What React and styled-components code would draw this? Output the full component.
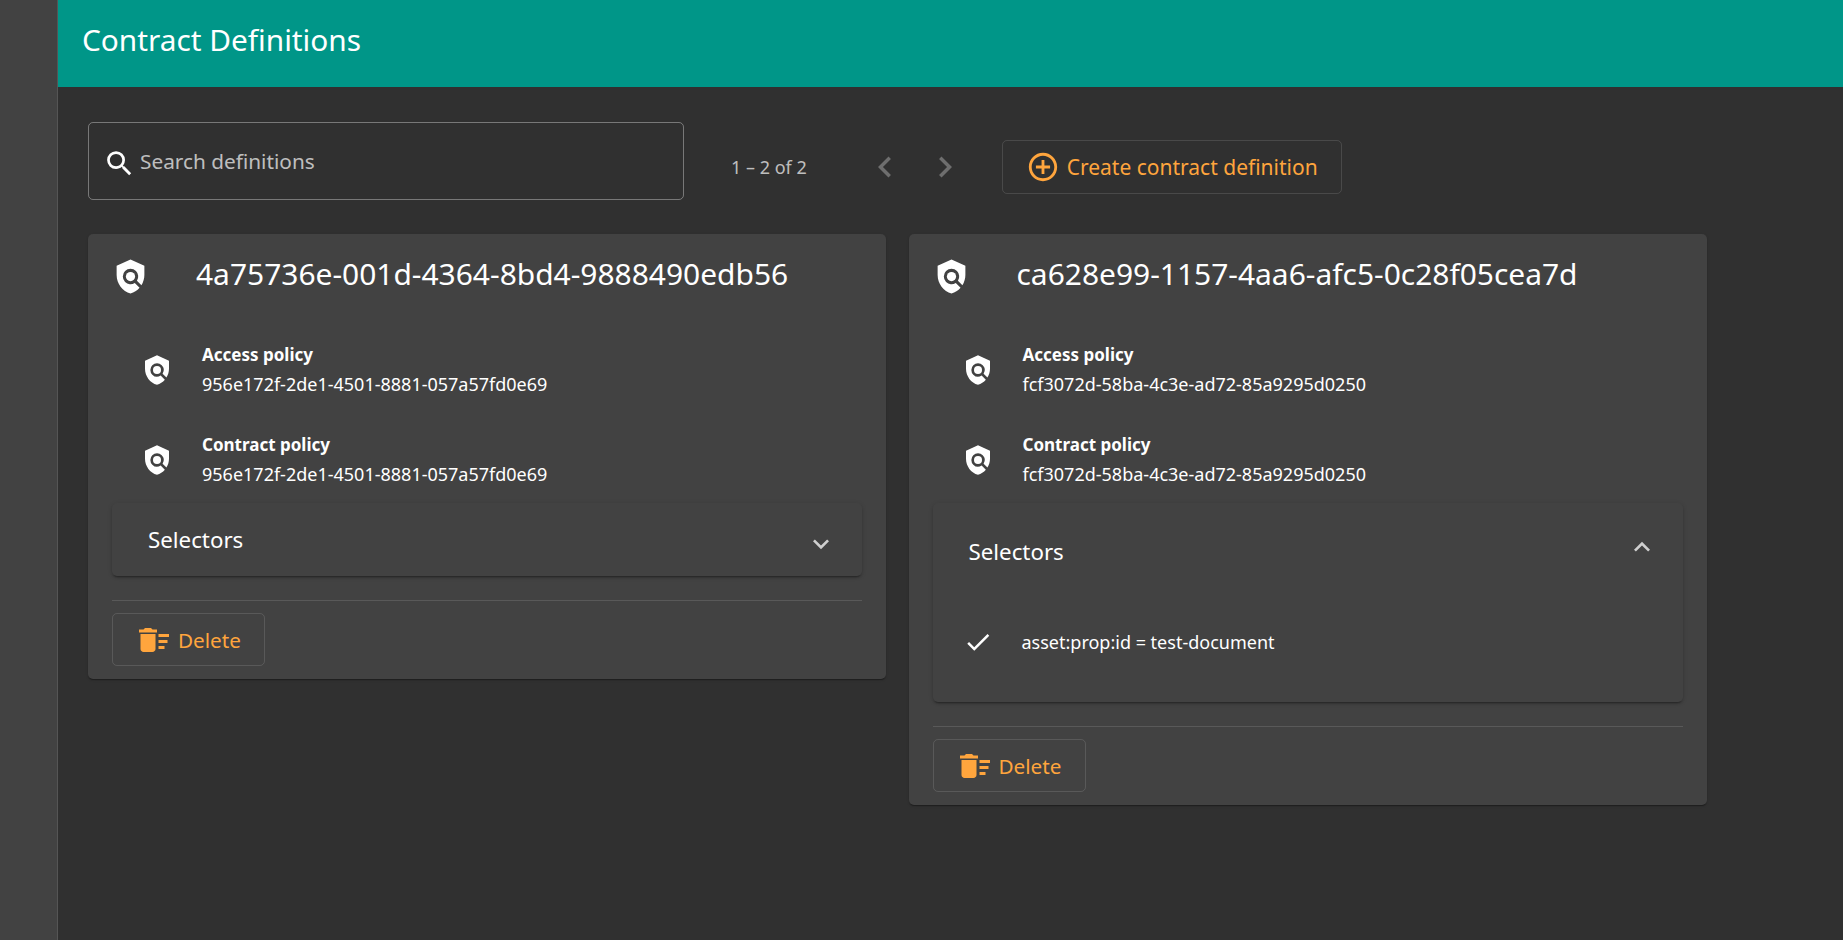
import React from 'react';
import styled, { createGlobalStyle } from 'styled-components';
import {
  MdSearch,
  MdChevronLeft,
  MdChevronRight,
  MdControlPoint,
  MdPolicy,
  MdExpandMore,
  MdExpandLess,
  MdCheck,
  MdDeleteSweep,
} from 'react-icons/md';

const GlobalStyle = createGlobalStyle`
  html, body {
    margin: 0;
    height: 100%;
    background-color: #303030;
    font-family: "Noto Sans", sans-serif;
    color: #fff;
  }
`;

const Shell = styled.div`
  display: flex;
  min-height: 940px;
`;

const Sidebar = styled.div`
  background-color: #424242;
  border-right: 1px solid #555;
  flex: 0 0 57px;
`;

const Content = styled.div`
  flex: 1;
  min-width: 0;
`;

const Header = styled.div`
  align-items: center;
  background-color: #009688;
  box-sizing: border-box;
  display: flex;
  font-size: 29.8px;
  height: 87px;
  padding: 0 24px 9px;
`;

const Main = styled.div`
  padding: 35px 136px 0 30px;
`;

const Toolbar = styled.div`
  align-items: center;
  display: flex;
  margin-bottom: 22px;
`;

const Search = styled.div`
  align-items: center;
  border: 1px solid rgba(255, 255, 255, 0.35);
  border-radius: 5px;
  box-sizing: border-box;
  color: rgba(255, 255, 255, 0.7);
  display: flex;
  font-size: 20.8px;
  gap: 4px;
  height: 78px;
  margin-bottom: 12px;
  padding: 0 0 0 14px;
  width: 596px;
`;

const SearchIcon = styled(MdSearch)`
  color: #fff;
  margin-top: 5px;
`;

const Paginator = styled.div`
  align-items: center;
  color: rgba(255, 255, 255, 0.7);
  display: flex;
  font-size: 18px;
  margin-left: 47px;
`;

const PageButtons = styled.div`
  display: flex;
  margin-left: 48px;
`;

const PageButton = styled.div`
  align-items: center;
  color: rgba(255, 255, 255, 0.3);
  display: flex;
  height: 40px;
  justify-content: center;
  width: 60px;
`;

const OutlineButton = styled.div`
  align-items: center;
  border: 1px solid rgba(255, 255, 255, 0.12);
  border-radius: 5px;
  box-sizing: border-box;
  color: #ffa53d;
  display: flex;
  font-size: ${props => props.$large ? 21 : 20.7}px;
  gap: ${props => props.$large ? 7 : 6}px;
  height: ${props => props.$large ? 54 : 53}px;
  padding: 0 23px;
  white-space: nowrap;
  width: ${props => props.$large ? '340px' : '153px'};
`;

const CreateWrap = styled.div`
  margin-left: 27px;
`;

const Cards = styled.div`
  align-items: start;
  display: grid;
  grid-template-columns: 798px 798px;
  column-gap: 22.5px;
`;

const Card = styled.div`
  background-color: #424242;
  border-radius: 5px;
  box-shadow: 0 2px 1px -1px rgba(0, 0, 0, 0.2), 0 1px 1px rgba(0, 0, 0, 0.14), 0 1px 3px rgba(0, 0, 0, 0.12);
  padding: 0 24px 13px;
`;

const CardHeader = styled.div`
  align-items: center;
  display: flex;
  font-size: 29.95px;
  gap: 47px;
  height: 78px;
`;

const HeaderIcon = styled(MdPolicy)`
  flex: none;
  margin-top: 6px;
`;

const Policies = styled.div`
  display: flex;
  flex-direction: column;
  gap: 30px;
  padding: 28px 0 13px 29px;
`;

const PolicyRow = styled.div`
  align-items: center;
  display: flex;
  gap: 29px;
  height: 60px;
`;

const PolicyText = styled.div`
  display: flex;
  flex-direction: column;
  font-size: 18px;
  gap: 9px;
  line-height: 21px;
  margin-top: -1px;
`;

const PolicyTitle = styled.div`
  font-size: 17px;
  font-weight: 700;
`;

const Panel = styled.div`
  background-color: #424242;
  border-radius: 5px;
  box-shadow: 0 3px 1px -2px rgba(0, 0, 0, 0.2), 0 2px 2px rgba(0, 0, 0, 0.14), 0 1px 5px rgba(0, 0, 0, 0.12);
`;

const PanelHeader = styled.div`
  align-items: center;
  display: flex;
  font-size: 22.3px;
  height: ${props => props.$open ? 96 : 73}px;
  justify-content: space-between;
  padding: 0 25px 0 36px;
`;

const PanelChevron = styled.div`
  color: rgba(255, 255, 255, 0.75);
  display: flex;
  margin-top: ${props => props.$open ? -8 : 8}px;
`;

const SelectorRow = styled.div`
  align-items: center;
  display: flex;
  font-size: 18px;
  gap: 29px;
  height: 60px;
  padding: 13px 0 30px 30px;
`;

const Divider = styled.div`
  border-top: 1px solid rgba(255, 255, 255, 0.12);
  margin: 24px 0 12px;
`;

const definitions = [
  {
    id: '4a75736e-001d-4364-8bd4-9888490edb56',
    policy: '956e172f-2de1-4501-8881-057a57fd0e69',
    open: false,
  },
  {
    id: 'ca628e99-1157-4aa6-afc5-0c28f05cea7d',
    policy: 'fcf3072d-58ba-4c3e-ad72-85a9295d0250',
    open: true,
    selector: 'asset:prop:id = test-document',
  },
];

const DefinitionCard = ({ id, policy, open, selector }) => (
  <Card>
    <CardHeader>
      <HeaderIcon size={37} />
      <span>{id}</span>
    </CardHeader>
    <Policies>
      <PolicyRow>
        <MdPolicy size={32} />
        <PolicyText>
          <PolicyTitle>Access policy</PolicyTitle>
          <div>{policy}</div>
        </PolicyText>
      </PolicyRow>
      <PolicyRow>
        <MdPolicy size={32} />
        <PolicyText>
          <PolicyTitle>Contract policy</PolicyTitle>
          <div>{policy}</div>
        </PolicyText>
      </PolicyRow>
    </Policies>
    <Panel>
      <PanelHeader $open={open}>
        <span>Selectors</span>
        <PanelChevron $open={open}>
          {open ? <MdExpandLess size={32} /> : <MdExpandMore size={32} />}
        </PanelChevron>
      </PanelHeader>
      {open && (
        <SelectorRow>
          <MdCheck size={30} />
          <span>{selector}</span>
        </SelectorRow>
      )}
    </Panel>
    <Divider />
    <OutlineButton>
      <MdDeleteSweep size={36} />
      <span>Delete</span>
    </OutlineButton>
  </Card>
);

const App = () => (
  <Shell>
    <GlobalStyle />
    <Sidebar />
    <Content>
      <Header>Contract Definitions</Header>
      <Main>
        <Toolbar>
          <Search>
            <SearchIcon size={33} />
            <span>Search definitions</span>
          </Search>
          <Paginator>
            <span>1 – 2 of 2</span>
            <PageButtons>
              <PageButton><MdChevronLeft size={42} /></PageButton>
              <PageButton><MdChevronRight size={42} /></PageButton>
            </PageButtons>
          </Paginator>
          <CreateWrap>
            <OutlineButton $large>
              <MdControlPoint size={36} />
              <span>Create contract definition</span>
            </OutlineButton>
          </CreateWrap>
        </Toolbar>
        <Cards>
          {definitions.map(d => <DefinitionCard key={d.id} {...d} />)}
        </Cards>
      </Main>
    </Content>
  </Shell>
);

export default App;
